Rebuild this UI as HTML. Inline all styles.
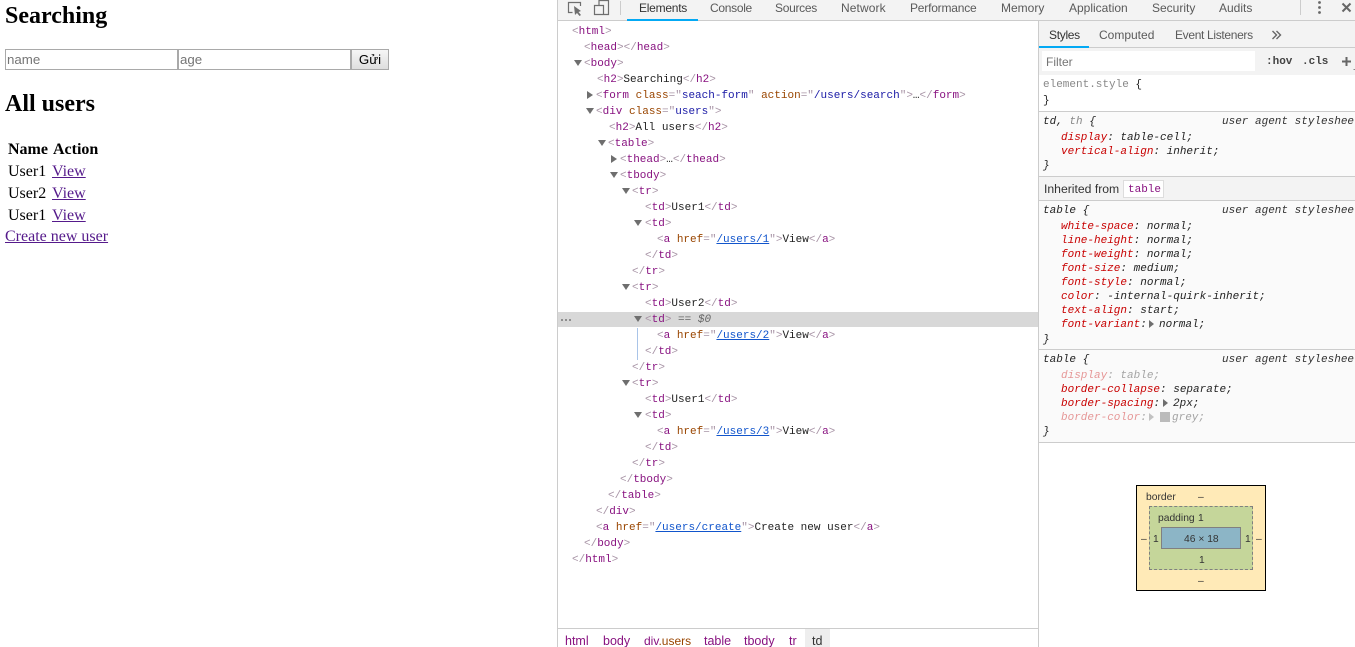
<!DOCTYPE html>
<html>
<head>
<meta charset="utf-8">
<title>Searching</title>
<style>
html,body{margin:0;padding:0;width:1355px;height:647px;overflow:hidden;background:#fff}
#root{position:relative;width:1355px;height:647px;overflow:hidden}
.a{position:absolute;white-space:pre}
.s{font-family:"Liberation Serif",serif;font-size:16px;line-height:18px;color:#000;margin-top:1px}
.s a{color:#551a8b;text-decoration:underline}
h2{position:absolute;margin:0;font:bold 24px/28px "Liberation Serif",serif;color:#000;left:5px}
.u{font-family:"Liberation Sans",sans-serif;font-size:12px;line-height:16px;color:#5a5a5a}
.l{position:absolute;white-space:pre;font-family:"Liberation Mono",monospace;font-size:11px;line-height:16px;color:#222;margin-top:1px}
.t{color:#881280}.b{color:#a894a6}.n{color:#994500}.v{color:#1a1aa6}.h{color:#15c;text-decoration:underline}
.arr{position:absolute;width:0;height:0}
.d{border-left:4px solid transparent;border-right:4px solid transparent;border-top:6px solid #6e6e6e}
.r{border-top:4px solid transparent;border-bottom:4px solid transparent;border-left:6px solid #6e6e6e}
.hr{position:absolute;height:1px;background:#ccc}
.p{color:#c80000;font-style:italic}.c{color:#222;font-style:italic}.ua{color:#333;font-style:italic}
.dim{opacity:.4}
.bm{position:absolute;font-family:"Liberation Sans",sans-serif;font-size:10.3px;line-height:12px;color:#333;white-space:pre;margin-top:1px}
.cr{position:absolute;font-family:"Liberation Sans",sans-serif;font-size:12.5px;line-height:16px;color:#881280;white-space:pre;top:633px}
</style>
</head>
<body>
<div id="root">

<h2 style="top:2px">Searching</h2>
<div class="a" style="left:5px;top:49px;height:19px;border:1px solid #a9a9a9;font:13.3px/19px 'Liberation Sans',sans-serif;color:#757575;padding-left:1px;width:170px">name</div>
<div class="a" style="left:178px;top:49px;width:170px;height:19px;border:1px solid #a9a9a9;font:13.3px/19px 'Liberation Sans',sans-serif;color:#757575;padding-left:1px">age</div>
<div class="a" style="left:351px;top:49px;width:36px;height:19px;border:1px solid #a9a9a9;background:linear-gradient(#f6f6f6,#dedede);font:13.3px/19px 'Liberation Sans',sans-serif;color:#000;text-align:center">Gửi</div>
<h2 style="top:90px">All users</h2>
<div class="a s" style="left:8px;top:140px;font-weight:bold">Name</div>
<div class="a s" style="left:53px;top:140px;font-weight:bold">Action</div>
<div class="a s" style="left:8px;top:162px">User1</div>
<div class="a s" style="left:52px;top:162px"><a>View</a></div>
<div class="a s" style="left:8px;top:184px">User2</div>
<div class="a s" style="left:52px;top:184px"><a>View</a></div>
<div class="a s" style="left:8px;top:206px">User1</div>
<div class="a s" style="left:52px;top:206px"><a>View</a></div>
<div class="a s" style="left:5px;top:227px"><a>Create new user</a></div>

<!-- devtools frame -->
<div class="a" style="left:557px;top:0;width:1px;height:647px;background:#ccc"></div>
<div class="a" style="left:558px;top:0;width:797px;height:20px;background:#f3f3f3"></div>
<div class="hr" style="left:558px;top:20px;width:797px"></div>
<div class="a" style="left:627px;top:19px;width:71px;height:2px;background:#03a9f4"></div>
<svg class="a" style="left:566px;top:0" width="44" height="18" viewBox="0 0 44 18">
<path d="M6.5 12.5H2.5V2.5H14.5V6" fill="none" stroke="#6e6e6e" stroke-width="1.2"/>
<path d="M8 6L15 11L12.5 12L15 15L13.5 16L11 13L9 15Z" fill="#6e6e6e"/>
<path d="M33 5V.5H42.5V14.5H28.5V5.5H37.5V14.5" fill="none" stroke="#6e6e6e" stroke-width="1.2"/>
</svg>
<div class="a" style="left:620px;top:1px;width:1px;height:14px;background:#ccc"></div>
<div class="a u" style="left:639px;top:0;color:#333;letter-spacing:-.25px">Elements</div>
<div class="a u" style="left:710px;top:0;letter-spacing:-.3px">Console</div>
<div class="a u" style="left:775px;top:0;letter-spacing:-.3px">Sources</div>
<div class="a u" style="left:841px;top:0;letter-spacing:.1px">Network</div>
<div class="a u" style="left:910px;top:0;letter-spacing:-.2px">Performance</div>
<div class="a u" style="left:1001px;top:0">Memory</div>
<div class="a u" style="left:1069px;top:0">Application</div>
<div class="a u" style="left:1152px;top:0">Security</div>
<div class="a u" style="left:1219px;top:0">Audits</div>
<div class="a" style="left:1300px;top:0;width:1px;height:15px;background:#ccc"></div>
<svg class="a" style="left:1315px;top:0" width="40" height="16" viewBox="0 0 40 16">
<circle cx="4.5" cy="2.5" r="1.4" fill="#666"/><circle cx="4.5" cy="7.5" r="1.4" fill="#666"/><circle cx="4.5" cy="12.5" r="1.4" fill="#666"/>
<path d="M27.5 3.5L35.5 11.5M35.5 3.5L27.5 11.5" stroke="#666" stroke-width="2" fill="none"/>
</svg>

<!-- DOM tree -->
<div class="a" style="left:558px;top:312px;width:480px;height:15px;background:#d8d8d8"></div>
<div class="a" style="left:637px;top:328px;width:1px;height:32px;background:#a9c4e8"></div>
<svg class="a" style="left:560px;top:318px" width="12" height="4"><circle cx="2" cy="2" r="1" fill="#777"/><circle cx="6" cy="2" r="1" fill="#777"/><circle cx="10" cy="2" r="1" fill="#777"/></svg>

<div class="l" style="left:572px;top:23px"><span class="b">&lt;</span><span class="t">html</span><span class="b">&gt;</span></div>
<div class="l" style="left:584px;top:39px"><span class="b">&lt;</span><span class="t">head</span><span class="b">&gt;&lt;/</span><span class="t">head</span><span class="b">&gt;</span></div>
<div class="arr d" style="left:574px;top:60px"></div>
<div class="l" style="left:584px;top:55px"><span class="b">&lt;</span><span class="t">body</span><span class="b">&gt;</span></div>
<div class="l" style="left:597px;top:71px"><span class="b">&lt;</span><span class="t">h2</span><span class="b">&gt;</span>Searching<span class="b">&lt;/</span><span class="t">h2</span><span class="b">&gt;</span></div>
<div class="arr r" style="left:587px;top:91px"></div>
<div class="l" style="left:596px;top:87px"><span class="b">&lt;</span><span class="t">form</span> <span class="n">class</span><span class="b">="</span><span class="v">seach-form</span><span class="b">"</span> <span class="n">action</span><span class="b">="</span><span class="v">/users/search</span><span class="b">"&gt;</span>…<span class="b">&lt;/</span><span class="t">form</span><span class="b">&gt;</span></div>
<div class="arr d" style="left:586px;top:108px"></div>
<div class="l" style="left:596px;top:103px"><span class="b">&lt;</span><span class="t">div</span> <span class="n">class</span><span class="b">="</span><span class="v">users</span><span class="b">"&gt;</span></div>
<div class="l" style="left:609px;top:119px"><span class="b">&lt;</span><span class="t">h2</span><span class="b">&gt;</span>All users<span class="b">&lt;/</span><span class="t">h2</span><span class="b">&gt;</span></div>
<div class="arr d" style="left:598px;top:140px"></div>
<div class="l" style="left:608px;top:135px"><span class="b">&lt;</span><span class="t">table</span><span class="b">&gt;</span></div>
<div class="arr r" style="left:611px;top:155px"></div>
<div class="l" style="left:620px;top:151px"><span class="b">&lt;</span><span class="t">thead</span><span class="b">&gt;</span>…<span class="b">&lt;/</span><span class="t">thead</span><span class="b">&gt;</span></div>
<div class="arr d" style="left:610px;top:172px"></div>
<div class="l" style="left:620px;top:167px"><span class="b">&lt;</span><span class="t">tbody</span><span class="b">&gt;</span></div>
<div class="arr d" style="left:622px;top:188px"></div>
<div class="l" style="left:632px;top:183px"><span class="b">&lt;</span><span class="t">tr</span><span class="b">&gt;</span></div>
<div class="l" style="left:645px;top:199px"><span class="b">&lt;</span><span class="t">td</span><span class="b">&gt;</span>User1<span class="b">&lt;/</span><span class="t">td</span><span class="b">&gt;</span></div>
<div class="arr d" style="left:634px;top:220px"></div>
<div class="l" style="left:645px;top:215px"><span class="b">&lt;</span><span class="t">td</span><span class="b">&gt;</span></div>
<div class="l" style="left:657px;top:231px"><span class="b">&lt;</span><span class="t">a</span> <span class="n">href</span><span class="b">="</span><span class="h">/users/1</span><span class="b">"&gt;</span>View<span class="b">&lt;/</span><span class="t">a</span><span class="b">&gt;</span></div>
<div class="l" style="left:645px;top:247px"><span class="b">&lt;/</span><span class="t">td</span><span class="b">&gt;</span></div>
<div class="l" style="left:632px;top:263px"><span class="b">&lt;/</span><span class="t">tr</span><span class="b">&gt;</span></div>
<div class="arr d" style="left:622px;top:284px"></div>
<div class="l" style="left:632px;top:279px"><span class="b">&lt;</span><span class="t">tr</span><span class="b">&gt;</span></div>
<div class="l" style="left:645px;top:295px"><span class="b">&lt;</span><span class="t">td</span><span class="b">&gt;</span>User2<span class="b">&lt;/</span><span class="t">td</span><span class="b">&gt;</span></div>
<div class="arr d" style="left:634px;top:316px"></div>
<div class="l" style="left:645px;top:311px"><span class="b">&lt;</span><span class="t">td</span><span class="b">&gt;</span> <span style="color:#666">==</span> <span style="color:#666;font-style:italic">$0</span></div>
<div class="l" style="left:657px;top:327px"><span class="b">&lt;</span><span class="t">a</span> <span class="n">href</span><span class="b">="</span><span class="h">/users/2</span><span class="b">"&gt;</span>View<span class="b">&lt;/</span><span class="t">a</span><span class="b">&gt;</span></div>
<div class="l" style="left:645px;top:343px"><span class="b">&lt;/</span><span class="t">td</span><span class="b">&gt;</span></div>
<div class="l" style="left:632px;top:359px"><span class="b">&lt;/</span><span class="t">tr</span><span class="b">&gt;</span></div>
<div class="arr d" style="left:622px;top:380px"></div>
<div class="l" style="left:632px;top:375px"><span class="b">&lt;</span><span class="t">tr</span><span class="b">&gt;</span></div>
<div class="l" style="left:645px;top:391px"><span class="b">&lt;</span><span class="t">td</span><span class="b">&gt;</span>User1<span class="b">&lt;/</span><span class="t">td</span><span class="b">&gt;</span></div>
<div class="arr d" style="left:634px;top:412px"></div>
<div class="l" style="left:645px;top:407px"><span class="b">&lt;</span><span class="t">td</span><span class="b">&gt;</span></div>
<div class="l" style="left:657px;top:423px"><span class="b">&lt;</span><span class="t">a</span> <span class="n">href</span><span class="b">="</span><span class="h">/users/3</span><span class="b">"&gt;</span>View<span class="b">&lt;/</span><span class="t">a</span><span class="b">&gt;</span></div>
<div class="l" style="left:645px;top:439px"><span class="b">&lt;/</span><span class="t">td</span><span class="b">&gt;</span></div>
<div class="l" style="left:632px;top:455px"><span class="b">&lt;/</span><span class="t">tr</span><span class="b">&gt;</span></div>
<div class="l" style="left:620px;top:471px"><span class="b">&lt;/</span><span class="t">tbody</span><span class="b">&gt;</span></div>
<div class="l" style="left:608px;top:487px"><span class="b">&lt;/</span><span class="t">table</span><span class="b">&gt;</span></div>
<div class="l" style="left:596px;top:503px"><span class="b">&lt;/</span><span class="t">div</span><span class="b">&gt;</span></div>
<div class="l" style="left:596px;top:519px"><span class="b">&lt;</span><span class="t">a</span> <span class="n">href</span><span class="b">="</span><span class="h">/users/create</span><span class="b">"&gt;</span>Create new user<span class="b">&lt;/</span><span class="t">a</span><span class="b">&gt;</span></div>
<div class="l" style="left:584px;top:535px"><span class="b">&lt;/</span><span class="t">body</span><span class="b">&gt;</span></div>
<div class="l" style="left:572px;top:551px"><span class="b">&lt;/</span><span class="t">html</span><span class="b">&gt;</span></div>

<!-- breadcrumbs -->
<div class="hr" style="left:558px;top:628px;width:480px"></div>
<div class="a" style="left:805px;top:629px;width:25px;height:18px;background:#eee"></div>
<div class="cr" style="left:565px">html</div>
<div class="cr" style="left:603px">body</div>
<div class="cr" style="left:644px;font-size:12px">div<span style="color:#994500">.users</span></div>
<div class="cr" style="left:704px">table</div>
<div class="cr" style="left:744px">tbody</div>
<div class="cr" style="left:789px">tr</div>
<div class="cr" style="left:812px;color:#333">td</div>

<!-- styles pane -->
<div class="a" style="left:1038px;top:21px;width:1px;height:626px;background:#ccc"></div>
<div class="a" style="left:1039px;top:21px;width:316px;height:26px;background:#f3f3f3"></div>
<div class="hr" style="left:1039px;top:47px;width:316px"></div>
<div class="a" style="left:1039px;top:46px;width:50px;height:2px;background:#03a9f4"></div>
<div class="a u" style="left:1049px;top:27px;color:#333;letter-spacing:-.3px">Styles</div>
<div class="a u" style="left:1099px;top:27px">Computed</div>
<div class="a u" style="left:1175px;top:27px;letter-spacing:-.33px">Event Listeners</div>
<svg class="a" style="left:1271px;top:29px" width="12" height="12" viewBox="0 0 12 12"><path d="M1.5 2L5.5 6L1.5 10M5.5 2L9.5 6L5.5 10" fill="none" stroke="#666" stroke-width="1.4"/></svg>
<div class="a" style="left:1039px;top:48px;width:316px;height:27px;background:#f3f3f3"></div>
<div class="a" style="left:1042px;top:51px;width:213px;height:20px;background:#fff"></div>
<div class="a u" style="left:1046px;top:54px;color:#757575">Filter</div>
<div class="l" style="left:1266px;top:53px;color:#444;font-weight:bold">:hov</div>
<div class="l" style="left:1302px;top:53px;color:#444;font-weight:bold">.cls</div>
<svg class="a" style="left:1340px;top:54px" width="15" height="16" viewBox="0 0 15 16"><path d="M2 7.5H11M6.5 3V12" stroke="#666" stroke-width="2" fill="none"/><path d="M13.5 15.5H15" stroke="#888" stroke-width="1"/></svg>

<div class="l" style="left:1043px;top:76px;color:#888">element.style <span style="color:#222">{</span></div>
<div class="l" style="left:1043px;top:92px">}</div>
<div class="hr" style="left:1039px;top:111px;width:316px"></div>
<div class="a" style="left:1039px;top:112px;width:316px;height:64px;background:#fafafa"></div>
<div class="l c" style="left:1043px;top:113px">td, <span style="color:#888">th</span> {</div>
<div class="l ua" style="left:1222px;top:113px">user agent stylesheet</div>
<div class="l" style="left:1061px;top:129px;font-style:italic"><span class="p">display</span>: table-cell;</div>
<div class="l" style="left:1061px;top:143px;font-style:italic"><span class="p">vertical-align</span>: inherit;</div>
<div class="l c" style="left:1043px;top:157px">}</div>
<div class="hr" style="left:1039px;top:176px;width:316px"></div>
<div class="a" style="left:1039px;top:177px;width:316px;height:23px;background:#f3f3f3"></div>
<div class="a u" style="left:1044px;top:181px;color:#333;font-size:12.2px">Inherited from</div>
<div class="a" style="left:1123px;top:180px;width:39px;height:16px;border:1px solid #ddd;background:#fff"></div>
<div class="l" style="left:1128px;top:181px;color:#881280">table</div>
<div class="hr" style="left:1039px;top:200px;width:316px"></div>
<div class="a" style="left:1039px;top:201px;width:316px;height:241px;background:#fafafa"></div>
<div class="l c" style="left:1043px;top:202px">table {</div>
<div class="l ua" style="left:1222px;top:202px">user agent stylesheet</div>
<div class="l" style="left:1061px;top:218px;font-style:italic"><span class="p">white-space</span>: normal;</div>
<div class="l" style="left:1061px;top:232px;font-style:italic"><span class="p">line-height</span>: normal;</div>
<div class="l" style="left:1061px;top:246px;font-style:italic"><span class="p">font-weight</span>: normal;</div>
<div class="l" style="left:1061px;top:260px;font-style:italic"><span class="p">font-size</span>: medium;</div>
<div class="l" style="left:1061px;top:274px;font-style:italic"><span class="p">font-style</span>: normal;</div>
<div class="l" style="left:1061px;top:288px;font-style:italic"><span class="p">color</span>: -internal-quirk-inherit;</div>
<div class="l" style="left:1061px;top:302px;font-style:italic"><span class="p">text-align</span>: start;</div>
<div class="l" style="left:1061px;top:316px;font-style:italic"><span class="p">font-variant</span>:</div>
<div class="arr r" style="left:1149px;top:320px;border-left-width:5px"></div>
<div class="l" style="left:1159px;top:316px;font-style:italic">normal;</div>
<div class="l c" style="left:1043px;top:331px">}</div>
<div class="hr" style="left:1039px;top:349px;width:316px"></div>
<div class="l c" style="left:1043px;top:351px">table {</div>
<div class="l ua" style="left:1222px;top:351px">user agent stylesheet</div>
<div class="l dim" style="left:1061px;top:367px;font-style:italic"><span class="p">display</span>: table;</div>
<div class="l" style="left:1061px;top:381px;font-style:italic"><span class="p">border-collapse</span>: separate;</div>
<div class="l" style="left:1061px;top:395px;font-style:italic"><span class="p">border-spacing</span>:</div>
<div class="arr r" style="left:1163px;top:399px;border-left-width:5px"></div>
<div class="l" style="left:1173px;top:395px;font-style:italic">2px;</div>
<div class="l dim" style="left:1061px;top:409px;font-style:italic"><span class="p">border-color</span>:</div>
<div class="arr r dim" style="left:1149px;top:413px;border-left-width:5px"></div>
<div class="a" style="left:1160px;top:412px;width:10px;height:10px;background:#bbb"></div>
<div class="l dim" style="left:1172px;top:409px;font-style:italic">grey;</div>
<div class="l c" style="left:1043px;top:423px">}</div>
<div class="hr" style="left:1039px;top:442px;width:316px"></div>

<!-- box model -->
<div class="a" style="left:1136px;top:485px;width:128px;height:104px;border:1px solid #000;background:#ffeab7"></div>
<div class="a" style="left:1149px;top:506px;width:102px;height:62px;border:1px dashed #808080;background:#c5d69a"></div>
<div class="a" style="left:1161px;top:527px;width:78px;height:20px;border:1px solid #808080;background:#8cb5c6"></div>
<div class="bm" style="left:1146px;top:491px">border</div>
<div class="bm" style="left:1198px;top:491px">–</div>
<div class="bm" style="left:1158px;top:512px">padding</div>
<div class="bm" style="left:1198px;top:512px">1</div>
<div class="bm" style="left:1184px;top:533px">46 × 18</div>
<div class="bm" style="left:1141px;top:533px">–</div>
<div class="bm" style="left:1153px;top:533px">1</div>
<div class="bm" style="left:1245px;top:533px">1</div>
<div class="bm" style="left:1256px;top:533px">–</div>
<div class="bm" style="left:1199px;top:554px">1</div>
<div class="bm" style="left:1198px;top:575px">–</div>

</div>
</body>
</html>
